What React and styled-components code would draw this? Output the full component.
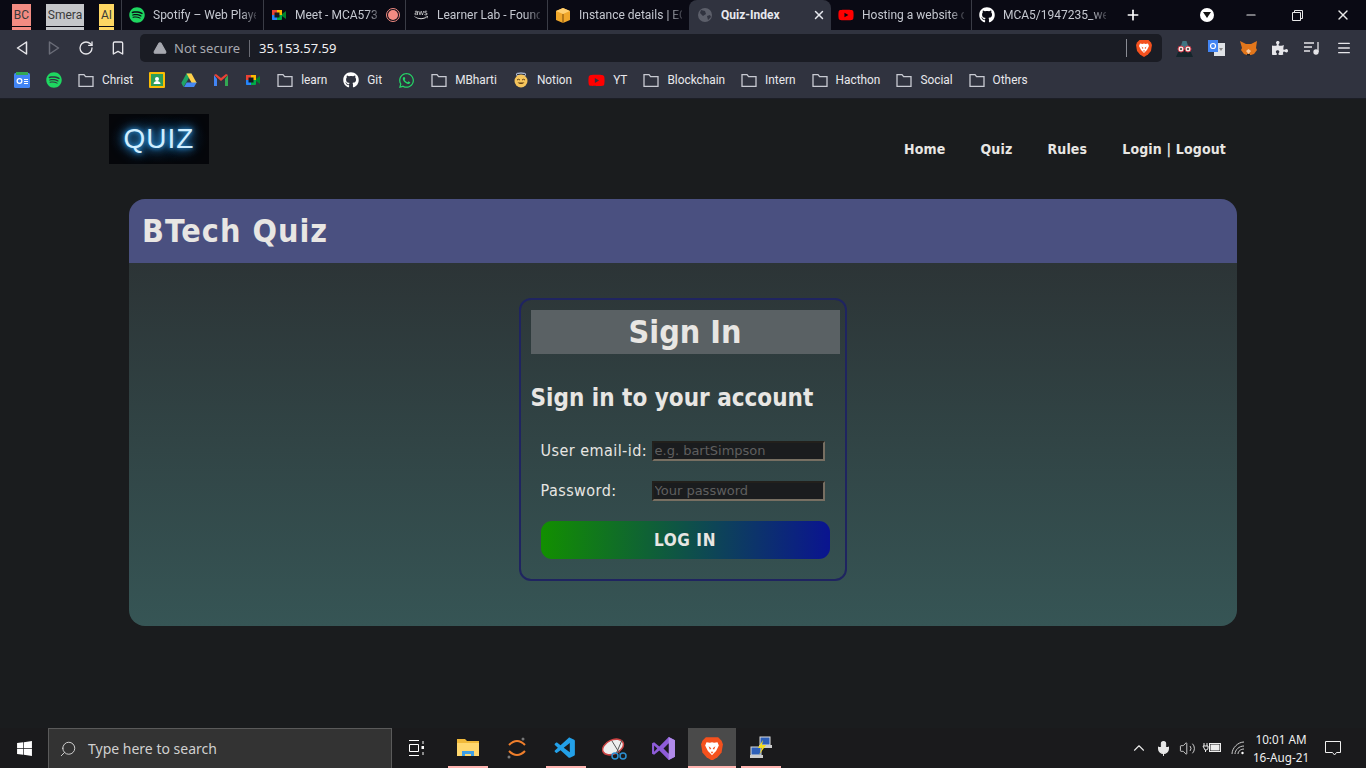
import React from "react";
import styled, { createGlobalStyle } from "styled-components";
import { FaSpotify, FaGithub, FaWhatsapp, FaYoutube, FaAws, FaWindows, FaPuzzlePiece } from "react-icons/fa";
import { VscVscode } from "react-icons/vsc";
import { X, Plus, Minus, ChevronUp, Search, Mic, Volume2, RotateCw, Bookmark, TriangleAlert, Menu } from "lucide-react";

const Global = createGlobalStyle`
  html, body { margin: 0; padding: 0; background: #1a1c1e; overflow: hidden; }
  * { box-sizing: border-box; }
`;

const UI = `Roboto, "Noto Sans", sans-serif`;
const ADDR = `"Noto Sans", "Open Sans", sans-serif`;
const PAGE = `"DejaVu Sans", "Liberation Sans", sans-serif`;

const Screen = styled.div`display:flex;flex-direction:column;width:1366px;height:768px;overflow:hidden;background:#1a1c1e;`;

/* Tab strip */
const TabStrip = styled.div`display:flex;height:30px;background:#0a0a14;flex:none;color:#c5c8d0;font:12px ${UI};`;
const Pinned = styled.div`display:flex;flex-direction:column;align-items:center;width:${p=>p.$w}px;margin-left:${p=>p.$ml}px;padding-top:4px;`;
const PinTile = styled.div`width:100%;height:22px;background:${p=>p.$c};color:#3a3a3a;font-size:12px;line-height:22px;text-align:center;`;
const PinStrip = styled.div`width:100%;height:3px;margin-top:1px;background:${p=>p.$c};`;
const Tab = styled.div`display:flex;align-items:center;width:${p=>p.$w||142}px;margin-left:${p=>p.$ml||0}px;padding:0 ${p=>p.$active?5:7}px 0 ${p=>p.$active?8:7}px;gap:8px;
  ${p=>p.$active?`background:#30333f;border-radius:8px 8px 0 0;color:#e6e8ee;font-weight:700;`:``}
  ${p=>p.$sep?`border-left:1px solid #3a3c46;`:``}`;
const TabIcon = styled.span`display:flex;width:16px;height:16px;flex:none;align-items:center;justify-content:center;`;
const TabTitle = styled.span`flex:1;white-space:nowrap;overflow:hidden;font-size:12px;
  ${p=>p.$fade?`-webkit-mask-image:linear-gradient(90deg,#000 85%,rgba(0,0,0,.25));mask-image:linear-gradient(90deg,#000 85%,rgba(0,0,0,.25));`:``}`;
const NewTab = styled.div`display:flex;align-items:center;justify-content:center;width:40px;color:#fff;`;
const StripSpace = styled.div`flex:1;`;
const DropDot = styled.div`display:flex;align-items:center;justify-content:center;width:14px;height:14px;border-radius:50%;background:#fff;margin-right:14px;align-self:center;`;
const WinBtn = styled.div`display:flex;align-items:center;justify-content:center;width:46px;color:#e8e8e8;`;
const RecDot = styled.span`width:10px;height:10px;border-radius:50%;background:#f28b82;outline:1px solid #f28b82;outline-offset:1px;flex:none;`;

/* Toolbar */
const Toolbar = styled.div`display:flex;align-items:center;height:35px;padding:4px 6px 3px 6px;background:#30333f;flex:none;`;
const ToolBtn = styled.div`display:flex;align-items:center;justify-content:center;width:32px;height:28px;color:${p=>p.$dim?"#6a6d78":"#e6e6ea"};`;
const Address = styled.div`display:flex;align-items:center;width:1022px;height:28px;margin:0 6px;padding:0 10px 0 13px;border-radius:5px;background:#1a1c24;font:13px ${ADDR};`;
const Insecure = styled.span`display:flex;align-items:center;gap:7px;color:#a7a9b0;padding-right:9px;border-right:1px solid #6a6c74;height:17px;`;
const Url = styled.span`color:#f0f0f2;margin-left:9px;flex:1;`;
const AddrSep = styled.span`width:1px;height:18px;background:#8a8c94;margin-right:9px;`;
const ExtRow = styled.div`display:flex;`;

/* Bookmarks */
const BookmarkBar = styled.div`display:flex;align-items:center;gap:16px;height:34px;padding:0 0 3px 14px;background:#30333f;border-bottom:1px solid #1c1e26;flex:none;`;
const Mark = styled.div`display:flex;align-items:center;gap:8px;color:#e8e8ec;font:11.85px ${UI};white-space:nowrap;`;

/* Page */
const Page = styled.main`flex:1;display:flex;flex-direction:column;padding:15px 129px 0 109px;min-height:0;color:#e8e6e3;font-family:${PAGE};font-stretch:condensed;background:#1a1c1e;`;
const Header = styled.header`display:flex;justify-content:space-between;height:50px;`;
const Logo = styled.div`width:100px;height:50px;background:radial-gradient(ellipse at center,#0a1a2a 0%,#05060a 70%);display:flex;align-items:center;justify-content:center;
  font:300 28px "Liberation Sans",sans-serif;letter-spacing:1px;color:#cfeeff;text-shadow:0 0 4px #2b8fd8,0 0 8px #2b8fd8,0 0 14px #2b8fd8;`;
const Nav = styled.nav`display:flex;align-items:flex-end;gap:35px;padding-right:11px;padding-bottom:7px;font-size:14px;font-weight:700;letter-spacing:.15px;`;
const NavLink = styled.a`color:#e8e6e3;text-decoration:none;`;
const Card = styled.section`margin:35px 0 0 20px;border-radius:16px;overflow:hidden;display:flex;flex-direction:column;height:427px;`;
const Banner = styled.div`background:#4a5080;height:64px;display:flex;align-items:center;padding-left:13px;`;
const BannerTitle = styled.h1`margin:0;font-size:32px;font-weight:700;letter-spacing:1px;`;
const CardBody = styled.div`flex:1;background:linear-gradient(180deg,#2c3436,#365555);display:flex;justify-content:center;padding-top:35px;`;
const SignBox = styled.form`width:328px;height:283px;border:2px solid #1f2460;border-radius:12px;padding:10px 5px 10px 10px;margin-left:-1px;`;
const SignTitle = styled.h2`margin:0;height:44px;line-height:44px;background:#5a6164;text-align:center;font-size:32px;font-weight:700;`;
const SignSub = styled.h3`margin:28px 0 0;font-size:24px;font-weight:700;line-height:32px;white-space:nowrap;`;
const Field = styled.div`display:flex;align-items:center;margin:${p=>p.$mt}px 0 0 10px;height:20px;`;
const Label = styled.label`width:111px;font-size:16px;white-space:nowrap;letter-spacing:.45px;padding-bottom:2px;`;
const Input = styled.input`width:173px;height:20px;background:#1a1c1e;border:2px inset #776f62;color:#e8e6e3;font:13px ${PAGE};padding:0 1px 2px;
  &::placeholder{color:#5f5f5f;}`;
const Submit = styled.button`display:block;width:289px;height:38px;margin:20px 0 0 10px;border:0;border-radius:11px;background:linear-gradient(90deg,#128f00,#0a1490);color:#e8e6e3;font:700 17px ${PAGE};font-stretch:condensed;letter-spacing:.6px;`;

/* Taskbar */
const Taskbar = styled.footer`display:flex;align-items:stretch;height:40px;background:#1a1a1c;color:#fff;flex:none;font:12px ${UI};`;
const Start = styled.div`display:flex;align-items:center;justify-content:center;width:48px;`;
const SearchBox = styled.div`display:flex;align-items:center;gap:11px;width:344px;padding-left:10px;background:#333;border:1px solid #5a5a5a;border-bottom:0;color:#d0d0d0;font:14px ${ADDR};
  svg{transform:scaleX(-1);}`;
const Slot = styled.div`position:relative;display:flex;align-items:center;justify-content:center;width:${p=>p.$w||49}px;padding-right:${p=>p.$pr||0}px;flex:none;background:${p=>p.$active?"#4a4a4a":"transparent"};
  ${p=>p.$open?`&::after{content:"";position:absolute;bottom:0;height:2px;background:#ffb4b0;width:${p.$active?"100%":"40px"};}`:``}`;
const Tray = styled.div`flex:1;display:flex;align-items:center;justify-content:flex-end;`;
const TrayIcon = styled.div`display:flex;align-items:center;justify-content:center;width:${p=>p.$w||24}px;color:#e8e8e8;`;
const Clock = styled.div`width:60px;text-align:center;font:11.7px/18px ${ADDR};color:#f0f0f0;white-space:nowrap;`;
const Notify = styled.div`display:flex;align-items:center;justify-content:center;width:38px;margin:0 14px 0 3px;`;
const FlipSvg = styled.svg`transform:${p=>p.$flip?"scaleX(-1)":"none"};`;

const Folder = ({ c = "#c8cad2" }) => (
  <svg width="16" height="16" viewBox="0 0 16 16" fill="none" stroke={c} strokeWidth="1.3"><path d="M1 2.7h5l1.600 2H15v9.600H1z" /></svg>
);
const GoogleDoc = () => (
  <svg width="16" height="16" viewBox="0 0 16 16"><rect y="1" width="16" height="15" rx="1.5" fill="#4285f4"/><rect x="2" y="0" width="12" height="3" fill="#34a853"/><circle cx="5.5" cy="9" r="2.4" fill="none" stroke="#fff" strokeWidth="1.2"/><path d="M10 7.5h4M10 9.5h4M10 11.5h4" stroke="#fff"/></svg>
);
const Classroom = () => (
  <svg width="16" height="16" viewBox="0 0 16 16"><rect width="16" height="16" fill="#fbbc04" rx="1"/><rect x="2" y="2" width="12" height="12" fill="#2f9e5a"/><circle cx="8" cy="7" r="2" fill="#fff"/><path d="M4.500 12c0-2 2-3 3.500-3s3.500 1 3.500 3z" fill="#fff"/></svg>
);
const Drive = () => (
  <svg width="16" height="16" viewBox="0 0 16 16"><path d="M5.500 1.500h5L5 11 2.500 15 0.300 11z" fill="#1fa463"/><path d="M10.500 1.500l5.200 9.500h-5L5.500 1.500z" fill="#ffd04b"/><path d="M3 15l2.700-4.500h10L13 15z" fill="#4688f1"/></svg>
);
const Gmail = () => (
  <svg width="16" height="16" viewBox="0 0 16 16"><path d="M1 3v11h3V7z" fill="#4285f4"/><path d="M15 3v11h-3V7z" fill="#34a853"/><path d="M1 3l7 6 7-6-2-1-5 4-5-4z" fill="#ea4335"/></svg>
);
const Meet = ({ s = 16 }) => (
  <svg width={s} height={s} viewBox="0 0 16 16"><rect x="1" y="3" width="10" height="10" rx="1" fill="#00ac47"/><path d="M1 3h5v5H1z" fill="#ea4335"/><path d="M1 8h5v5H2a1 1 0 0 1-1-1z" fill="#2684fc"/><path d="M6 3h5v5H6z" fill="#ffba00"/><rect x="3.500" y="5.500" width="5" height="5" fill="#14171f"/><path d="M11 7l4-3v8l-4-3z" fill="#00832d"/></svg>
);
const Crate = () => (
  <svg width="16" height="16" viewBox="0 0 16 16"><path d="M1 4l7-3 7 3v9l-7 3-7-3z" fill="#f0a72b"/><path d="M1 4l7 3 7-3-7-3z" fill="#ffcf70"/><path d="M8 7v9" stroke="#7b4a0a"/></svg>
);
const Globe = () => (
  <svg width="16" height="16" viewBox="0 0 16 16"><circle cx="8" cy="8" r="7" fill="#5c5f6a"/><path d="M4 3l4 1 1 3-3 2-3-3zM10 9l3-1 1 2-3 3z" fill="#30333f"/></svg>
);
const Smile = () => (
  <svg width="16" height="16" viewBox="0 0 16 16"><ellipse cx="8" cy="2.500" rx="5" ry="1.500" fill="none" stroke="#cfe0ff"/><circle cx="8" cy="9" r="6.500" fill="#f6c55c"/><path d="M4 8q1.500-1.500 3 0M9 8q1.500-1.500 3 0" stroke="#5a3a10" fill="none"/><path d="M4.500 10.500q3.500 3 7 0z" fill="#5a3a10"/></svg>
);
const DropTri = () => (
  <svg width="8" height="6" viewBox="0 0 8 6"><path d="M0 0h8L4 6z" fill="#111" /></svg>
);
const Restore = () => (
  <svg width="11" height="11" viewBox="0 0 11 11" fill="none" stroke="#e8e8e8"><path d="M.500 2.500h8v8h-8zM2.500 2.500v-2h8v8h-2" /></svg>
);
const BraveLion = ({ s = 16 }) => (
  <svg width={s} height={s * 1.12} viewBox="0 0 16 18"><path d="M3.500 1h9L15 3.500 16 6l-1 6-3 3.500L8 18l-4-2.500L1 12 0 6l1-2.500z" fill="#f4511e"/><path d="M4 4.500l2.500.5L8 4.500l1.500.5L12 4.500l1 2.500-2 4-1.500 1.500L8 14l-1.500-1.500L5 11 3 7z" fill="#fff"/><path d="M5.500 7.500l2 1.500-1 1zM10.500 7.500l-2 1.500 1 1z" fill="#f4511e"/><path d="M7 11.500h2L8 13z" fill="#f4511e"/></svg>
);
const Spy = () => (
  <svg width="19" height="17" viewBox="0 0 19 17"><path d="M5 9l2.500-8h4L14 9z" fill="#3f7482"/><path d="M1 17l3-7h11l3 7z" fill="#14252b"/><circle cx="6" cy="9" r="3" fill="#f3e6e0" stroke="#d0384a"/><circle cx="13" cy="9" r="3" fill="#f3e6e0" stroke="#d0384a"/><circle cx="6" cy="9" r="1" fill="#333"/><circle cx="13" cy="9" r="1" fill="#333"/></svg>
);
const Translate = () => (
  <svg width="17" height="16" viewBox="0 0 17 16"><path d="M6 3h11v13H6z" fill="#dfe2e6"/><path d="M0 0h10v12H0z" fill="#4285f4"/><circle cx="5" cy="6" r="2.500" fill="none" stroke="#fff" strokeWidth="1.200"/><path d="M11 8h4l-2 3z" fill="#888"/></svg>
);
const Fox = () => (
  <svg width="17" height="16" viewBox="0 0 17 16"><path d="M0 1l6 3h5l6-3-1 7 1 2-3 4-3 1H7l-3-1-3-4 1-2z" fill="#e2761b"/><path d="M6 11l2.500 3L11 11 8.500 9z" fill="#f6c9a0"/><path d="M7 14h3v1.500H7z" fill="#222"/></svg>
);
const Playlist = () => (
  <svg width="16" height="14" viewBox="0 0 16 14" fill="none" stroke="#e6e6ea" strokeWidth="1.300"><path d="M0 2h10M0 6h8M0 10h6M14 1v10" /><circle cx="12" cy="11" r="2" fill="#e6e6ea"/></svg>
);
const BackTri = ({ flip, c = "#e6e6ea" }) => (
  <FlipSvg $flip={flip} width="12" height="14" viewBox="0 0 12 14" fill="none" stroke={c} strokeWidth="1.500"><path d="M10.500 1v12L1.500 7z" strokeLinejoin="round" /></FlipSvg>
);
const TaskView = () => (
  <svg width="16" height="16" viewBox="0 0 16 16" fill="none" stroke="#fff"><path d="M1 .500h10M1 15.500h10M1.500 4.500h9v7h-9zM15 1v3M15 12v3" /><rect x="13.500" y="6" width="3" height="3" fill="#fff" stroke="none" /></svg>
);
const Explorer = () => (
  <svg width="22" height="20" viewBox="0 0 22 20"><path d="M0 1h8l2 2h12v15H0z" fill="#f0b93a"/><path d="M0 5h22v13H0z" fill="#ffd76e"/><path d="M5 18v-5h12v5h-3v-2H8v2z" fill="#3f9fe6"/></svg>
);
const Ring = () => (
  <svg width="22" height="24" viewBox="0 0 22 24" fill="none" stroke="#f07f2c" strokeWidth="2"><path d="M3 9q8-8 16 0M3 15q8 8 16 0"/><circle cx="3" cy="21" r="1.500" fill="#777" stroke="none"/><circle cx="17" cy="3" r="1.500" fill="#777" stroke="none"/></svg>
);
const Snip = () => (
  <svg width="26" height="24" viewBox="0 0 26 24"><ellipse cx="11" cy="11" rx="11" ry="7" fill="#eee" stroke="#c44" strokeWidth="1.500" transform="rotate(-25 11 11)"/><path d="M10 5l8 13M20 4l-6 14" stroke="#555" /><circle cx="21" cy="20" r="3" fill="none" stroke="#2c8fd0" strokeWidth="1.500"/><circle cx="13" cy="20" r="3" fill="none" stroke="#2c8fd0" strokeWidth="1.500"/></svg>
);
const VStudio = () => (
  <svg width="25" height="25" viewBox="0 0 24 24"><path d="M17 1l6 3v16l-6 3-9-9-5 4-2-1V7l2-1 5 4z" fill="#8e5cd9"/><path d="M3 9v6l3-3z" fill="#1a1a1c"/><path d="M17 1l6 3v16l-6 3z" fill="#b18bea"/><path d="M17 7l-5 5 5 5z" fill="#1a1a1c"/></svg>
);
const Network = () => (
  <svg width="24" height="24" viewBox="0 0 24 24"><rect x="11" y="1" width="10" height="8" fill="#2d5fb8" stroke="#ddd"/><rect x="10" y="9" width="13" height="3" fill="#ccc"/><rect x="2" y="11" width="10" height="8" fill="#2d5fb8" stroke="#ddd"/><rect x="1" y="19" width="13" height="3" fill="#ccc"/><path d="M14 4l-5 8h4l-3 7 7-10h-4z" fill="#f5dd1e"/></svg>
);
const Battery = () => (
  <svg width="20" height="12" viewBox="0 0 20 12" fill="none" stroke="#eee"><path d="M2 1v3M5 1v3M1 4h5v2a2 2 0 0 1-2 2h-1zM3.500 8v2"/><rect x="7.500" y="1.500" width="11" height="8" /><rect x="9" y="3" width="8" height="5" fill="#eee"/></svg>
);
const Wifi = () => (
  <svg width="14" height="14" viewBox="0 0 14 14" fill="none" stroke="#ccc"><path d="M1 13C1 7 7 1 13 1M4 13c0-4 4-8 9-8M7 13c0-3 3-5 6-5"/><circle cx="11.500" cy="12" r="1.200" fill="#fff" stroke="none"/></svg>
);
const Balloon = () => (
  <svg width="16" height="16" viewBox="0 0 16 16" fill="none" stroke="#f0f0f0"><path d="M.500 1.500h15v11h-4l-2 2.500-2-2.500h-7z" /></svg>
);

const marks = [
  { i: <GoogleDoc /> }, { i: <FaSpotify size={16} color="#1ed760" /> }, { i: <Folder />, t: "Christ" },
  { i: <Classroom /> }, { i: <Drive /> }, { i: <Gmail /> }, { i: <Meet /> }, { i: <Folder />, t: "learn" },
  { i: <FaGithub size={16} color="#fff" />, t: "Git" }, { i: <FaWhatsapp size={17} color="#25d366" /> },
  { i: <Folder />, t: "MBharti" }, { i: <Smile />, t: "Notion" }, { i: <FaYoutube size={17} color="#f00" />, t: "YT" },
  { i: <Folder />, t: "Blockchain" }, { i: <Folder />, t: "Intern" }, { i: <Folder />, t: "Hacthon" },
  { i: <Folder />, t: "Social" }, { i: <Folder />, t: "Others" },
];

export default function App() {
  return (
    <Screen>
      <Global />
      <TabStrip>
        <Pinned $w={19} $ml={12}><PinTile $c="#f28b82">BC</PinTile><PinStrip $c="#f28b82" /></Pinned>
        <Pinned $w={38} $ml={15}><PinTile $c="#c4c6ca">Smera</PinTile><PinStrip $c="#c4c6ca" /></Pinned>
        <Pinned $w={15} $ml={15}><PinTile $c="#fdd663">AI</PinTile><PinStrip $c="#fdd663" /></Pinned>
        <Tab $sep $ml={7}><TabIcon><FaSpotify size={16} color="#1ed760" /></TabIcon><TabTitle $fade>Spotify – Web Playe</TabTitle></Tab>
        <Tab $sep><TabIcon><Meet /></TabIcon><TabTitle $fade>Meet - MCA573</TabTitle><RecDot /></Tab>
        <Tab $sep><TabIcon><FaAws size={14} color="#ddd" /></TabIcon><TabTitle $fade>Learner Lab - Found</TabTitle></Tab>
        <Tab $sep><TabIcon><Crate /></TabIcon><TabTitle $fade>Instance details | EC</TabTitle></Tab>
        <Tab $active><TabIcon><Globe /></TabIcon><TabTitle>Quiz-Index</TabTitle><X size={14} color="#e6e8ee" strokeWidth={2.5} /></Tab>
        <Tab $w={140}><TabIcon><FaYoutube size={18} color="#f00" /></TabIcon><TabTitle $fade>Hosting a website o</TabTitle></Tab>
        <Tab $sep><TabIcon><FaGithub size={16} color="#fff" /></TabIcon><TabTitle $fade>MCA5/1947235_wel</TabTitle></Tab>
        <NewTab><Plus size={16} strokeWidth={2.5} /></NewTab>
        <StripSpace />
        <DropDot><DropTri /></DropDot>
        <WinBtn><Minus size={14} /></WinBtn>
        <WinBtn><Restore /></WinBtn>
        <WinBtn><X size={16} /></WinBtn>
      </TabStrip>

      <Toolbar>
        <ToolBtn><BackTri /></ToolBtn>
        <ToolBtn $dim><BackTri flip c="#6a6d78" /></ToolBtn>
        <ToolBtn><RotateCw size={16} strokeWidth={2} /></ToolBtn>
        <ToolBtn><Bookmark size={16} strokeWidth={2} /></ToolBtn>
        <Address>
          <Insecure><TriangleAlert size={14} fill="#a7a9b0" color="#a7a9b0" />Not secure</Insecure>
          <Url>35.153.57.59</Url>
          <AddrSep />
          <BraveLion />
        </Address>
        <ExtRow>
          <ToolBtn><Spy /></ToolBtn>
          <ToolBtn><Translate /></ToolBtn>
          <ToolBtn><Fox /></ToolBtn>
          <ToolBtn><FaPuzzlePiece size={16} /></ToolBtn>
          <ToolBtn><Playlist /></ToolBtn>
          <ToolBtn><Menu size={16} strokeWidth={2} /></ToolBtn>
        </ExtRow>
      </Toolbar>

      <BookmarkBar>
        {marks.map((m, i) => (
          <Mark key={i}>{m.i}{m.t && <span>{m.t}</span>}</Mark>
        ))}
      </BookmarkBar>

      <Page>
        <Header>
          <Logo>QUIZ</Logo>
          <Nav>
            <NavLink>Home</NavLink>
            <NavLink>Quiz</NavLink>
            <NavLink>Rules</NavLink>
            <NavLink>Login | Logout</NavLink>
          </Nav>
        </Header>
        <Card>
          <Banner><BannerTitle>BTech Quiz</BannerTitle></Banner>
          <CardBody>
            <SignBox onSubmit={(e) => e.preventDefault()}>
              <SignTitle>Sign In</SignTitle>
              <SignSub>Sign in to your account</SignSub>
              <Field $mt={27}><Label>User email-id:</Label><Input placeholder="e.g. bartSimpson" /></Field>
              <Field $mt={20}><Label>Password:</Label><Input type="password" placeholder="Your password" /></Field>
              <Submit>LOG IN</Submit>
            </SignBox>
          </CardBody>
        </Card>
      </Page>

      <Taskbar>
        <Start><FaWindows size={17} /></Start>
        <SearchBox><Search size={18} strokeWidth={1.3} />Type here to search</SearchBox>
        <Slot $w={51} $pr={3}><TaskView /></Slot>
        <Slot $open><Explorer /></Slot>
        <Slot><Ring /></Slot>
        <Slot $open><VscVscode size={25} color="#23a0e8" /></Slot>
        <Slot><Snip /></Slot>
        <Slot><VStudio /></Slot>
        <Slot $active $open $w={48}><BraveLion s={22} /></Slot>
        <Slot $open><Network /></Slot>
        <Tray>
          <TrayIcon><ChevronUp size={18} strokeWidth={1.5} /></TrayIcon>
          <TrayIcon><Mic size={17} strokeWidth={1.5} fill="#e8e8e8" /></TrayIcon>
          <TrayIcon><Volume2 size={17} strokeWidth={1.2} /></TrayIcon>
          <TrayIcon $w={26}><Battery /></TrayIcon>
          <TrayIcon $w={26}><Wifi /></TrayIcon>
          <Clock>10:01 AM<br />16-Aug-21</Clock>
          <Notify><Balloon /></Notify>
        </Tray>
      </Taskbar>
    </Screen>
  );
}
